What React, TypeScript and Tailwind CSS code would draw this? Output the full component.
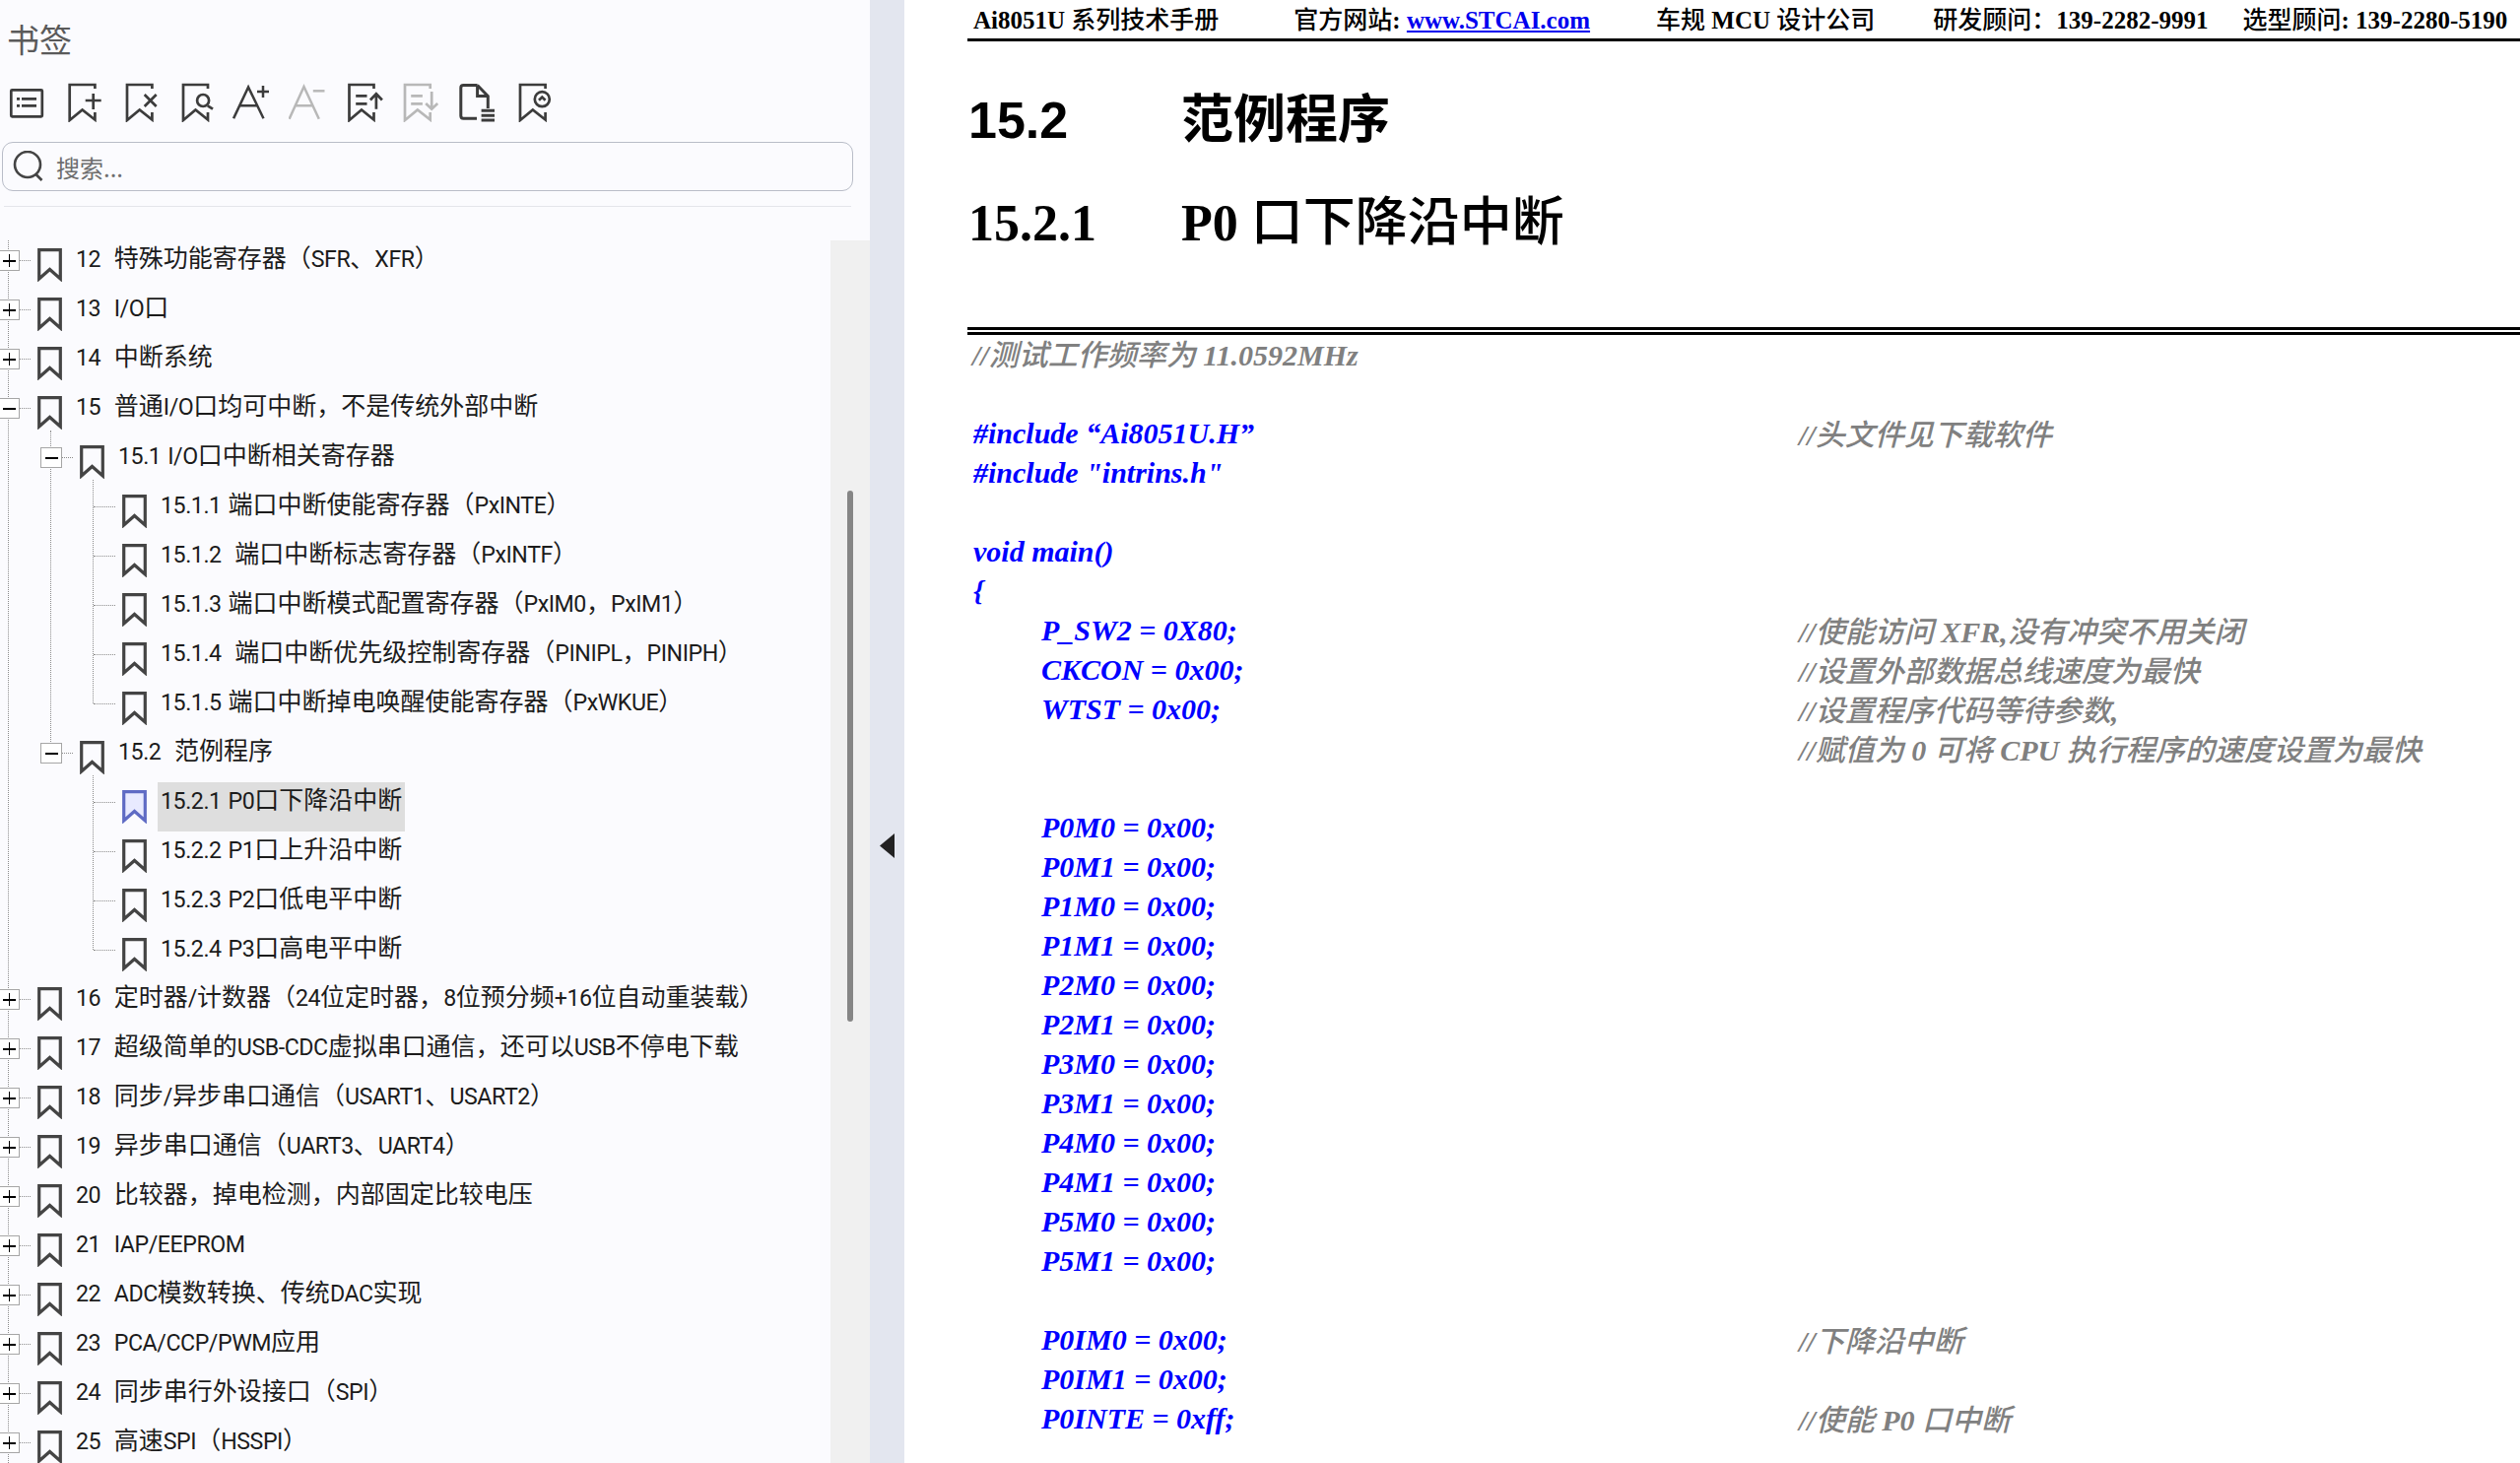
import React from 'react';

const DARK = '#3c3c3c';
const GREY = '#b8b8b8';

// bookmark outline with the open right edge used by the toolbar icons
const ToolMark = ({ x, right = x + 26, color = DARK }: { x: number; right?: number; color?: string }) => (
  <path
    d={`M${right} 6V2H${x}V38L${(x + right) / 2} 27.5L${right} 37.5V30`}
    fill="none"
    stroke={color}
    strokeWidth={2.7}
  />
);

const toolIcons = [
  <svg key="list" width="40" height="40" fill="none" stroke={DARK} strokeWidth="2.7">
    <rect x="4.3" y="7.3" width="31.5" height="27" rx="1" />
    <path d="M15 16.3H30M15 23.3H30" />
    <path d="M10 16.3H13M10 23.3H13" />
  </svg>,
  <svg key="add" width="40" height="40" fill="none" stroke={DARK} strokeWidth="2.7">
    <ToolMark x={6.7} right={32.4} />
    <path d="M22.7 18H38.7M30.7 11V27" />
  </svg>,
  <svg key="del" width="40" height="40" fill="none" stroke={DARK} strokeWidth="2.7">
    <ToolMark x={7} right={32.4} />
    <path d="M24.7 12L36.7 24M36.7 12L24.7 24" />
  </svg>,
  <svg key="find" width="40" height="40" fill="none" stroke={DARK} strokeWidth="2.7">
    <ToolMark x={7} right={32} />
    <circle cx="27.1" cy="18" r="6" fill="#fbfbfe" />
    <path d="M31.8 23.3L37 26.7" />
  </svg>,
  <svg key="bigger" width="40" height="40" fill="none" stroke={DARK} strokeWidth="2.5">
    <path d="M1.1 36.2L16.1 4.5L31.5 36.2M7 23.3H25.3" />
    <path d="M25 9H37M31 3V15" />
  </svg>,
  <svg key="smaller" width="40" height="40" fill="none" stroke={GREY} strokeWidth="2.5">
    <path d="M.6 36.7L15.5 4L30.8 36.7M6.5 23.3H24.5" />
    <path d="M24.8 8.3H36.5" />
  </svg>,
  <svg key="up" width="40" height="40" fill="none" stroke={DARK} strokeWidth="2.7">
    <ToolMark x={3.5} right={28.5} />
    <path d="M10.2 13.3H21.5M10.2 21.3H21.5" />
    <path d="M30.9 26.7V11.3M24.9 17.5L30.9 11.3L36.9 17.5" />
  </svg>,
  <svg key="down" width="40" height="40" fill="none" stroke={GREY} strokeWidth="2.7">
    <ToolMark x={3} right={28.7} color={GREY} />
    <path d="M9.2 13.3H20.9M9.2 21.3H20.9" />
    <path d="M30.2 9V26.7M24.2 21L30.2 26.7L36.2 21" />
  </svg>,
  <svg key="doc" width="40" height="40" fill="none" stroke={DARK} strokeWidth="3">
    <path d="M19.6 2.5H5.5Q2.8 2.5 2.8 5V33.5Q2.8 36.2 5.5 36.2H19" />
    <path d="M19.6 2.5L30.3 13.5V26M19.6 2.5V13.5H30.3" />
    <path d="M23.6 28.3H37M23.6 33.3H37M23.6 38H37" />
  </svg>,
  <svg key="mark" width="40" height="40" fill="none" stroke={DARK} strokeWidth="2.7">
    <ToolMark x={5} right={30.6} />
    <circle cx="27.3" cy="16.7" r="7.5" fill="#fbfbfe" />
    <path d="M24 17.8L27.3 14.6L30.6 17.8" />
  </svg>,
];

const TreeMark = ({ active }: { active?: boolean }) => (
  <svg width="25" height="34" className="mt-[8px] shrink-0">
    <path
      d="M1.7 1.7H23.3V31L12.5 21.5L1.7 31Z"
      fill={active ? '#e8eaff' : 'none'}
      stroke={active ? '#5f6bc4' : '#444444'}
      strokeWidth="3.2"
    />
  </svg>
);

type Row = { level: 0 | 1 | 2; text: string; box?: '+' | '-'; active?: boolean };

const rows: Row[] = [
  { level: 0, box: '+', text: '12  特殊功能寄存器（SFR、XFR）' },
  { level: 0, box: '+', text: '13  I/O口' },
  { level: 0, box: '+', text: '14  中断系统' },
  { level: 0, box: '-', text: '15  普通I/O口均可中断，不是传统外部中断' },
  { level: 1, box: '-', text: '15.1 I/O口中断相关寄存器' },
  { level: 2, text: '15.1.1 端口中断使能寄存器（PxINTE）' },
  { level: 2, text: '15.1.2  端口中断标志寄存器（PxINTF）' },
  { level: 2, text: '15.1.3 端口中断模式配置寄存器（PxIM0，PxIM1）' },
  { level: 2, text: '15.1.4  端口中断优先级控制寄存器（PINIPL，PINIPH）' },
  { level: 2, text: '15.1.5 端口中断掉电唤醒使能寄存器（PxWKUE）' },
  { level: 1, box: '-', text: '15.2  范例程序' },
  { level: 2, text: '15.2.1 P0口下降沿中断', active: true },
  { level: 2, text: '15.2.2 P1口上升沿中断' },
  { level: 2, text: '15.2.3 P2口低电平中断' },
  { level: 2, text: '15.2.4 P3口高电平中断' },
  { level: 0, box: '+', text: '16  定时器/计数器（24位定时器，8位预分频+16位自动重装载）' },
  { level: 0, box: '+', text: '17  超级简单的USB-CDC虚拟串口通信，还可以USB不停电下载' },
  { level: 0, box: '+', text: '18  同步/异步串口通信（USART1、USART2）' },
  { level: 0, box: '+', text: '19  异步串口通信（UART3、UART4）' },
  { level: 0, box: '+', text: '20  比较器，掉电检测，内部固定比较电压' },
  { level: 0, box: '+', text: '21  IAP/EEPROM' },
  { level: 0, box: '+', text: '22  ADC模数转换、传统DAC实现' },
  { level: 0, box: '+', text: '23  PCA/CCP/PWM应用' },
  { level: 0, box: '+', text: '24  同步串行外设接口（SPI）' },
  { level: 0, box: '+', text: '25  高速SPI（HSSPI）' },
];

const indent = ['pl-[38px]', 'pl-[81px]', 'pl-[124px]'];
const boxLeft = ['left-[-2px]', 'left-[41px]', ''];
const stubLeft = ['left-[20px] w-[11px]', 'left-[63px] w-[11px]', 'left-[95px] w-[22px]'];

// latin in these titles is narrower than the CJK, so the two get separate sizes
const TreeText = ({ text }: { text: string }) => (
  <>
    {text.split(/([\u3000-\u9fff\uff00-\uffef]+)/).map((part, i) =>
      i % 2 ? (
        <span key={i} className="text-[25px]">{part}</span>
      ) : (
        <span key={i} className="font-['Roboto',sans-serif] text-[23.2px] tracking-[-0.45px] [word-spacing:1.5px]">{part}</span>
      ),
    )}
  </>
);

const TreeRow = ({ row }: { row: Row }) => (
  <div className={`relative flex h-[50px] items-start ${indent[row.level]}`}>
    <span className={`absolute top-[20px] border-t border-dotted border-[#8c8c8c] ${stubLeft[row.level]}`} />
    {row.box && (
      <span className={`absolute top-[10px] flex h-[21px] w-[22px] items-center justify-center border border-[#a6a6a6] bg-white ${boxLeft[row.level]}`}>
        <span className="relative block h-[13px] w-[13px]">
          <span className="absolute left-0 top-[6px] h-[1.5px] w-[13px] bg-black" />
          {row.box === '+' && <span className="absolute left-[6px] top-0 h-[13px] w-[1.5px] bg-black" />}
        </span>
      </span>
    )}
    <TreeMark active={row.active} />
    <span
      className={`ml-[11px] h-[50px] whitespace-pre px-[3px] text-[25px] leading-[33px] text-[#1c1c1c] ${row.active ? 'bg-[#dedede]' : ''}`}
    >
      <TreeText text={row.text} />
    </span>
  </div>
);

const Sidebar = () => (
  <aside className="flex h-full w-[883px] shrink-0 flex-col overflow-hidden bg-[#fbfbfe] font-['Noto_Sans_CJK_SC',sans-serif]">
    <div className="h-[72px] pl-[7px] pt-[9px] text-[33px] leading-[60px] text-[#5a5a5a]">书签</div>
    <div className="mt-[12px] flex h-[40px] gap-[17.3px] pl-[7px]">{toolIcons}</div>
    <div className="ml-[2px] mt-[20px] flex h-[50px] w-[864px] items-center rounded-[11px] border border-[#b9bdc8] pl-[10px]">
      <svg width="32" height="32" fill="none" stroke="#444444" strokeWidth="2.6" className="shrink-0">
        <circle cx="15" cy="14" r="13" />
        <path d="M23.5 24L29.5 30" />
      </svg>
      <span className="ml-[12px] mt-[1px] text-[24px] text-[#6e6e6e]">搜索...</span>
    </div>
    <div className="ml-[4px] mt-[15px] h-[1px] w-[860px] bg-[#e4e5ea]" />
    <div className="mt-[34px] flex min-h-0 flex-1">
      <div className="relative w-[843px] shrink-0">
        <span className="absolute bottom-0 left-[8px] top-0 border-l border-dotted border-[#8c8c8c]" />
        <span className="absolute left-[51px] top-[193px] h-[318px] border-l border-dotted border-[#8c8c8c]" />
        <span className="absolute left-[94px] top-[243px] h-[227px] border-l border-dotted border-[#8c8c8c]" />
        <span className="absolute left-[94px] top-[543px] h-[177px] border-l border-dotted border-[#8c8c8c]" />
        {rows.map((row) => (
          <TreeRow key={row.text} row={row} />
        ))}
      </div>
      <div className="w-[40px] bg-[#f0f0f0]">
        <div className="ml-[17px] mt-[254px] h-[539px] w-[6px] rounded-full bg-[#858585]" />
      </div>
    </div>
  </aside>
);

// text runs of the PDF page: latin is bold Times-like, CJK is set lighter
const Zh = ({ children }: { children: React.ReactNode }) => (
  <span className="font-['Noto_Sans_CJK_SC',sans-serif] font-medium">{children}</span>
);

const Code = ({ indented, children, note }: { indented?: boolean; children?: React.ReactNode; note?: React.ReactNode }) => (
  <div className="grid h-[40px] grid-cols-[838px_1fr] whitespace-pre leading-[40px]">
    <div className={`text-[#0000ff] ${indented ? 'pl-[69px]' : ''}`}>{children}</div>
    <div className="mt-[-1px] text-[#808080]">{note}</div>
  </div>
);

const registers = ['P0M0', 'P0M1', 'P1M0', 'P1M1', 'P2M0', 'P2M1', 'P3M0', 'P3M1', 'P4M0', 'P4M1', 'P5M0', 'P5M1'];

const PdfPage = () => (
  <main className="min-w-0 flex-1 overflow-hidden bg-white pl-[64px] font-['Liberation_Serif','Noto_Sans_CJK_SC',serif] font-bold text-black">
    <div className="flex h-[42px] items-start whitespace-pre border-b-[3px] border-black pl-[6px] text-[25px] leading-[37px]">
      <span>Ai8051U <Zh>系列技术手册</Zh></span>
      <span className="ml-[76px]"><Zh>官方网站</Zh>: <span className="text-[#0000ee] underline">www.STCAI.com</span></span>
      <span className="ml-[67px]"><Zh>车规</Zh> MCU <Zh>设计公司</Zh></span>
      <span className="ml-[59px]"><Zh>研发顾问：</Zh>139-2282-9991</span>
      <span className="ml-[35px]"><Zh>选型顾问</Zh>: 139-2280-5190</span>
    </div>

    <h2 className="mt-[48px] flex h-[64px] items-baseline pl-[1px] font-['Liberation_Sans','Noto_Sans_CJK_SC',sans-serif] text-[52px] leading-[64px]">
      <span className="w-[216px]">15.2</span>
      <span className="text-[53px]">范例程序</span>
    </h2>
    <h3 className="mt-[35px] flex h-[64px] items-baseline whitespace-pre pl-[1px] text-[52px] leading-[64px]">
      <span className="w-[216px]">15.2.1</span>
      <span>P0 <span className="font-['Noto_Sans_CJK_SC',sans-serif] text-[53px] font-medium">口下降沿中断</span></span>
    </h3>

    <div className="mt-[79px] h-[3px] bg-black" />
    <div className="mt-[2px] h-[3px] bg-black" />

    <div className="pl-[6px] text-[30px] italic">
      <Code><span className="ml-[-1px] mt-[-2px] block text-[#808080]">//<Zh>测试工作频率为</Zh> 11.0592MHz</span></Code>
      <Code />
      <Code note={<>//<Zh>头文件见下载软件</Zh></>}>#include “Ai8051U.H”</Code>
      <Code>#include "intrins.h"</Code>
      <Code />
      <Code>void main()</Code>
      <Code>{'{'}</Code>
      <Code indented note={<>//<Zh>使能访问</Zh> XFR,<Zh>没有冲突不用关闭</Zh></>}>P_SW2 = 0X80;</Code>
      <Code indented note={<>//<Zh>设置外部数据总线速度为最快</Zh></>}>CKCON = 0x00;</Code>
      <Code indented note={<>//<Zh>设置程序代码等待参数</Zh>,</>}>WTST = 0x00;</Code>
      <Code note={<>//<Zh>赋值为</Zh> 0 <Zh>可将</Zh> CPU <Zh>执行程序的速度设置为最快</Zh></>} />
      <Code />
      {registers.map((name) => (
        <Code key={name} indented>{name} = 0x00;</Code>
      ))}
      <Code />
      <Code indented note={<>//<Zh>下降沿中断</Zh></>}>P0IM0 = 0x00;</Code>
      <Code indented>P0IM1 = 0x00;</Code>
      <Code indented note={<>//<Zh>使能</Zh> P0 <Zh>口中断</Zh></>}>P0INTE = 0xff;</Code>
    </div>
  </main>
);

export default function App() {
  return (
    <div className="flex h-[1485px] w-[2558px] overflow-hidden">
      <Sidebar />
      <div className="flex w-[35px] shrink-0 justify-center bg-[#e3e6ef] pt-[846px]">
        <svg width="15" height="25">
          <path d="M15 0V25L0 12.5Z" fill="#222222" />
        </svg>
      </div>
      <PdfPage />
    </div>
  );
}
